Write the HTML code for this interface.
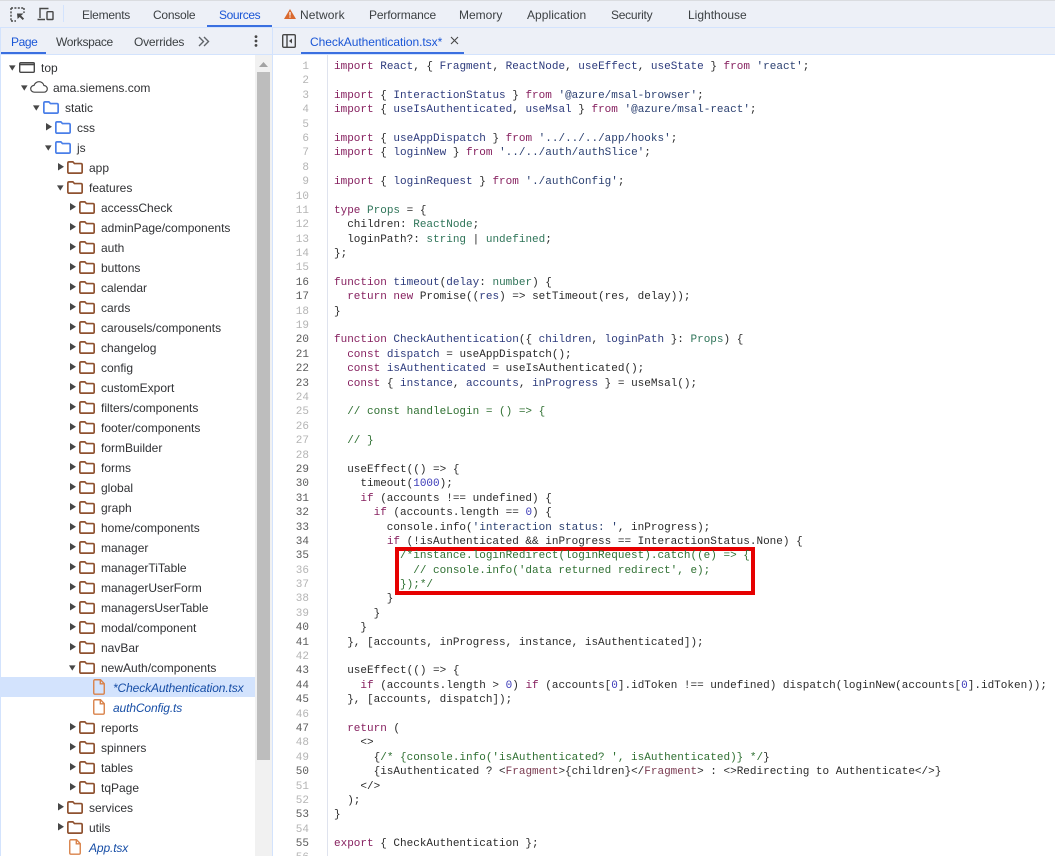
<!DOCTYPE html>
<html><head><meta charset="utf-8">
<style>
html,body{margin:0;padding:0;width:1055px;height:856px;overflow:hidden;background:#fff}
body{position:relative;font-family:"Liberation Sans",sans-serif;font-size:12px;color:#3c4043}
.a{position:absolute}
.bar{position:absolute;background:#edf0f7}
.t{position:absolute;white-space:nowrap;line-height:16px}
.tb{top:7px}.sb{top:34px}
.b{color:#1a56d6}
.row{position:absolute;white-space:nowrap;line-height:20px;height:20px;color:#303134}
.row.f{font-style:italic;color:#174ea6;letter-spacing:-.12px}
svg{position:absolute;overflow:visible}
#code{position:absolute;z-index:2;left:334px;top:60px;font:11px/14.39px "Liberation Mono",monospace;color:#2a2a2a;white-space:pre}
#nums{position:absolute;left:280px;width:29px;top:60px;font:11px/14.39px "Liberation Mono",monospace;color:#b4b4b4;text-align:right;white-space:pre}
#nums b{font-weight:normal;color:#5a5a5a}
i{font-style:normal}
.k{color:#86205f}.d{color:#2c3a7c}.y{color:#2e7458}.s{color:#2a3f70}.n{color:#3a3ab8}.c{color:#2f7032}.g{color:#7a3a50}
</style></head><body>
<svg width="0" height="0" style="position:absolute"><defs>
<symbol id="fo" viewBox="0 0 16 13"><path d="M.85 2.2c0-.8.6-1.35 1.3-1.35h3.7l1.6 1.7h6.4c.8 0 1.3.6 1.3 1.3v7.2c0 .8-.5 1.1-1.3 1.1H2.150c-.8 0-1.300-.3-1.300-1.100z" fill="none" stroke="currentColor" stroke-width="1.7"/></symbol>
<symbol id="fi" viewBox="0 0 12 16"><path d="M.75 1.9c0-.6.5-1.15 1.15-1.15h5.6l3.75 3.9v9.4c0 .6-.5 1.15-1.15 1.15H1.9c-.65 0-1.15-.55-1.15-1.15z M7.3.9v3.9h3.9" fill="none" stroke="#d9824a" stroke-width="1.4"/></symbol>
<symbol id="ao" viewBox="0 0 8 6"><path d="M0 0h7.5L3.75 6z" fill="#474747"/></symbol>
<symbol id="ac" viewBox="0 0 6 8"><path d="M0 0l6 3.75L0 7.5z" fill="#474747"/></symbol>
</defs></svg>

<div class="a" style="left:0;top:0;width:1055px;height:1px;background:#dadce0"></div>
<div class="bar" style="left:0;top:1px;width:1055px;height:26px"></div>
<div class="a" style="left:0;top:27px;width:1055px;height:1px;background:#d3e3fd"></div>
<div class="bar" style="left:0;top:28px;width:1055px;height:26px"></div>
<div class="a" style="left:0;top:54px;width:1055px;height:1px;background:#d3e3fd"></div>
<div class="a" style="left:0;top:28px;width:1px;height:828px;background:#d3e3fd"></div>
<div class="a" style="left:272px;top:28px;width:1px;height:828px;background:#d3e3fd"></div>
<div class="a" style="left:63px;top:5px;width:1px;height:17px;background:#d3e3fd"></div>

<svg style="left:10px;top:7px" width="15" height="15" viewBox="0 0 15 15"><path d="M1 1h13M1 1v13M1 14h5M14 1v5" fill="none" stroke="#474747" stroke-width="1.4" stroke-dasharray="2 1.4"/><path d="M7 6.5h6.5l-2.4 2.1 3 3-1.400 1.400-3-3L7.600 12z" fill="#474747"/></svg>
<svg style="left:37px;top:7px" width="17" height="14" viewBox="0 0 17 14"><path d="M3 11V1.500h8.500M.5 12.500H8" fill="none" stroke="#474747" stroke-width="1.4"/><rect x="10" y="4.700" width="6" height="7.800" fill="none" stroke="#474747" stroke-width="1.4" rx=".6"/></svg>

<div class="t tb" style="left:82px;letter-spacing:-.25px">Elements</div>
<div class="t tb" style="left:153px;letter-spacing:-.25px">Console</div>
<div class="t tb b" style="left:219px;letter-spacing:-.4px">Sources</div>
<div class="a" style="left:207px;top:25px;width:65px;height:2px;background:#3a6fe0"></div>
<svg style="left:284px;top:9px" width="12" height="10" viewBox="0 0 12 10"><path d="M6 0l6 10H0z" fill="#d9692f"/><path d="M5.400 3h1.200v3.600H5.400zM5.400 7.400h1.200v1.200H5.400z" fill="#fff"/></svg>
<div class="t tb" style="left:300px;letter-spacing:.1px">Network</div>
<div class="t tb" style="left:369px;letter-spacing:-.15px">Performance</div>
<div class="t tb" style="left:459px">Memory</div>
<div class="t tb" style="left:527px;letter-spacing:.05px">Application</div>
<div class="t tb" style="left:611px;letter-spacing:-.25px">Security</div>
<div class="t tb" style="left:688px">Lighthouse</div>

<div class="t sb b" style="left:11px;letter-spacing:-.4px">Page</div>
<div class="a" style="left:1px;top:52px;width:45px;height:2px;background:#3a6fe0"></div>
<div class="t sb" style="left:56px;letter-spacing:-.33px">Workspace</div>
<div class="t sb" style="left:134px;letter-spacing:-.2px">Overrides</div>
<svg style="left:198px;top:36px" width="12" height="11" viewBox="0 0 12 11"><path d="M1 1l4.500 4.500L1 10M6 1l4.500 4.500L6 10" fill="none" stroke="#5f6368" stroke-width="1.4"/></svg>
<svg style="left:254px;top:35px" width="4" height="12" viewBox="0 0 4 12"><circle cx="2" cy="1.600" r="1.400" fill="#474747"/><circle cx="2" cy="6" r="1.400" fill="#474747"/><circle cx="2" cy="10.400" r="1.400" fill="#474747"/></svg>
<svg style="left:282px;top:34px" width="14" height="14" viewBox="0 0 14 14"><rect x=".7" y=".7" width="12.600" height="12.600" rx="1.200" fill="none" stroke="#474747" stroke-width="1.4"/><path d="M5 1v12" stroke="#474747" stroke-width="1.4"/><path d="M10 4.500v5L7 7z" fill="#474747"/></svg>
<div class="t sb b" style="left:310px;letter-spacing:-.05px">CheckAuthentication.tsx*</div>
<svg style="left:451px;top:37px" width="7" height="7" viewBox="0 0 7 7"><path d="M0 0l7 7M7 0L0 7" stroke="#474747" stroke-width="1.1"/></svg>
<div class="a" style="left:301px;top:52px;width:163px;height:2px;background:#3a6fe0"></div>

<!-- scrollbar -->
<div class="a" style="left:255px;top:55px;width:17px;height:801px;background:#f1f1f1"></div>
<div class="a" style="left:257px;top:72px;width:13px;height:688px;background:#bdbdbd"></div>
<svg style="left:259px;top:62px" width="9" height="5" viewBox="0 0 9 5"><path d="M4.500 0L9 5H0z" fill="#a3a3a3"/></svg>

<!-- tree -->
<div class="a" style="left:1px;top:677px;width:254px;height:20px;background:#d3e3fd"></div>

<svg style="left:9px;top:65px" width="7" height="6"><use href="#ao"/></svg>
<svg style="left:19px;top:62px" width="16" height="11" viewBox="0 0 16 11"><rect x=".7" y=".7" width="14.600" height="9.600" rx="1" fill="none" stroke="#474747" stroke-width="1.4"/><path d="M1 2.500h14" stroke="#474747" stroke-width="1.6"/></svg>
<div class="row" style="left:41px;top:58px">top</div>

<svg style="left:21px;top:85px" width="7" height="6"><use href="#ao"/></svg>
<svg style="left:30px;top:81px" width="18" height="12" viewBox="0 0 18 12"><path d="M4.500 11.200C2.300 11.200.7 9.700.7 7.800c0-1.900 1.500-3.300 3.300-3.400C4.700 2.200 6.800.7 9 .7c2.500 0 4.500 1.700 4.900 3.800 1.900.2 3.400 1.600 3.400 3.400 0 1.900-1.600 3.300-3.500 3.300z" fill="none" stroke="#474747" stroke-width="1.2"/></svg>
<div class="row" style="left:53px;top:78px">ama.siemens.com</div>

<svg style="left:33px;top:105px" width="7" height="6"><use href="#ao"/></svg>
<svg style="left:43px;top:101px;color:#4a7fe8" width="16" height="13"><use href="#fo"/></svg>
<div class="row" style="left:65px;top:98px">static</div>

<svg style="left:46px;top:123px" width="6" height="8"><use href="#ac"/></svg>
<svg style="left:55px;top:121px;color:#4a7fe8" width="16" height="13"><use href="#fo"/></svg>
<div class="row" style="left:77px;top:118px">css</div>

<svg style="left:45px;top:145px" width="7" height="6"><use href="#ao"/></svg>
<svg style="left:55px;top:141px;color:#4a7fe8" width="16" height="13"><use href="#fo"/></svg>
<div class="row" style="left:77px;top:138px">js</div>

<svg style="left:58px;top:163px" width="6" height="8"><use href="#ac"/></svg>
<svg style="left:67px;top:161px;color:#8f5230" width="16" height="13"><use href="#fo"/></svg>
<div class="row" style="left:89px;top:158px">app</div>

<svg style="left:57px;top:185px" width="7" height="6"><use href="#ao"/></svg>
<svg style="left:67px;top:181px;color:#8f5230" width="16" height="13"><use href="#fo"/></svg>
<div class="row" style="left:89px;top:178px">features</div>

<svg style="left:70px;top:203px" width="6" height="8"><use href="#ac"/></svg><svg style="left:79px;top:201px;color:#8f5230" width="16" height="13"><use href="#fo"/></svg><div class="row" style="left:101px;top:198px">accessCheck</div>
<svg style="left:70px;top:223px" width="6" height="8"><use href="#ac"/></svg><svg style="left:79px;top:221px;color:#8f5230" width="16" height="13"><use href="#fo"/></svg><div class="row" style="left:101px;top:218px">adminPage/components</div>
<svg style="left:70px;top:243px" width="6" height="8"><use href="#ac"/></svg><svg style="left:79px;top:241px;color:#8f5230" width="16" height="13"><use href="#fo"/></svg><div class="row" style="left:101px;top:238px">auth</div>
<svg style="left:70px;top:263px" width="6" height="8"><use href="#ac"/></svg><svg style="left:79px;top:261px;color:#8f5230" width="16" height="13"><use href="#fo"/></svg><div class="row" style="left:101px;top:258px">buttons</div>
<svg style="left:70px;top:283px" width="6" height="8"><use href="#ac"/></svg><svg style="left:79px;top:281px;color:#8f5230" width="16" height="13"><use href="#fo"/></svg><div class="row" style="left:101px;top:278px">calendar</div>
<svg style="left:70px;top:303px" width="6" height="8"><use href="#ac"/></svg><svg style="left:79px;top:301px;color:#8f5230" width="16" height="13"><use href="#fo"/></svg><div class="row" style="left:101px;top:298px">cards</div>
<svg style="left:70px;top:323px" width="6" height="8"><use href="#ac"/></svg><svg style="left:79px;top:321px;color:#8f5230" width="16" height="13"><use href="#fo"/></svg><div class="row" style="left:101px;top:318px">carousels/components</div>
<svg style="left:70px;top:343px" width="6" height="8"><use href="#ac"/></svg><svg style="left:79px;top:341px;color:#8f5230" width="16" height="13"><use href="#fo"/></svg><div class="row" style="left:101px;top:338px">changelog</div>
<svg style="left:70px;top:363px" width="6" height="8"><use href="#ac"/></svg><svg style="left:79px;top:361px;color:#8f5230" width="16" height="13"><use href="#fo"/></svg><div class="row" style="left:101px;top:358px">config</div>
<svg style="left:70px;top:383px" width="6" height="8"><use href="#ac"/></svg><svg style="left:79px;top:381px;color:#8f5230" width="16" height="13"><use href="#fo"/></svg><div class="row" style="left:101px;top:378px">customExport</div>
<svg style="left:70px;top:403px" width="6" height="8"><use href="#ac"/></svg><svg style="left:79px;top:401px;color:#8f5230" width="16" height="13"><use href="#fo"/></svg><div class="row" style="left:101px;top:398px">filters/components</div>
<svg style="left:70px;top:423px" width="6" height="8"><use href="#ac"/></svg><svg style="left:79px;top:421px;color:#8f5230" width="16" height="13"><use href="#fo"/></svg><div class="row" style="left:101px;top:418px">footer/components</div>
<svg style="left:70px;top:443px" width="6" height="8"><use href="#ac"/></svg><svg style="left:79px;top:441px;color:#8f5230" width="16" height="13"><use href="#fo"/></svg><div class="row" style="left:101px;top:438px">formBuilder</div>
<svg style="left:70px;top:463px" width="6" height="8"><use href="#ac"/></svg><svg style="left:79px;top:461px;color:#8f5230" width="16" height="13"><use href="#fo"/></svg><div class="row" style="left:101px;top:458px">forms</div>
<svg style="left:70px;top:483px" width="6" height="8"><use href="#ac"/></svg><svg style="left:79px;top:481px;color:#8f5230" width="16" height="13"><use href="#fo"/></svg><div class="row" style="left:101px;top:478px">global</div>
<svg style="left:70px;top:503px" width="6" height="8"><use href="#ac"/></svg><svg style="left:79px;top:501px;color:#8f5230" width="16" height="13"><use href="#fo"/></svg><div class="row" style="left:101px;top:498px">graph</div>
<svg style="left:70px;top:523px" width="6" height="8"><use href="#ac"/></svg><svg style="left:79px;top:521px;color:#8f5230" width="16" height="13"><use href="#fo"/></svg><div class="row" style="left:101px;top:518px">home/components</div>
<svg style="left:70px;top:543px" width="6" height="8"><use href="#ac"/></svg><svg style="left:79px;top:541px;color:#8f5230" width="16" height="13"><use href="#fo"/></svg><div class="row" style="left:101px;top:538px">manager</div>
<svg style="left:70px;top:563px" width="6" height="8"><use href="#ac"/></svg><svg style="left:79px;top:561px;color:#8f5230" width="16" height="13"><use href="#fo"/></svg><div class="row" style="left:101px;top:558px">managerTiTable</div>
<svg style="left:70px;top:583px" width="6" height="8"><use href="#ac"/></svg><svg style="left:79px;top:581px;color:#8f5230" width="16" height="13"><use href="#fo"/></svg><div class="row" style="left:101px;top:578px">managerUserForm</div>
<svg style="left:70px;top:603px" width="6" height="8"><use href="#ac"/></svg><svg style="left:79px;top:601px;color:#8f5230" width="16" height="13"><use href="#fo"/></svg><div class="row" style="left:101px;top:598px">managersUserTable</div>
<svg style="left:70px;top:623px" width="6" height="8"><use href="#ac"/></svg><svg style="left:79px;top:621px;color:#8f5230" width="16" height="13"><use href="#fo"/></svg><div class="row" style="left:101px;top:618px">modal/component</div>
<svg style="left:70px;top:643px" width="6" height="8"><use href="#ac"/></svg><svg style="left:79px;top:641px;color:#8f5230" width="16" height="13"><use href="#fo"/></svg><div class="row" style="left:101px;top:638px">navBar</div>
<svg style="left:69px;top:665px" width="7" height="6"><use href="#ao"/></svg><svg style="left:79px;top:661px;color:#8f5230" width="16" height="13"><use href="#fo"/></svg><div class="row" style="left:101px;top:658px">newAuth/components</div>
<svg style="left:93px;top:679px" width="12" height="16"><use href="#fi"/></svg><div class="row f" style="left:113px;top:678px">*CheckAuthentication.tsx</div>
<svg style="left:93px;top:699px" width="12" height="16"><use href="#fi"/></svg><div class="row f" style="left:113px;top:698px">authConfig.ts</div>
<svg style="left:70px;top:723px" width="6" height="8"><use href="#ac"/></svg><svg style="left:79px;top:721px;color:#8f5230" width="16" height="13"><use href="#fo"/></svg><div class="row" style="left:101px;top:718px">reports</div>
<svg style="left:70px;top:743px" width="6" height="8"><use href="#ac"/></svg><svg style="left:79px;top:741px;color:#8f5230" width="16" height="13"><use href="#fo"/></svg><div class="row" style="left:101px;top:738px">spinners</div>
<svg style="left:70px;top:763px" width="6" height="8"><use href="#ac"/></svg><svg style="left:79px;top:761px;color:#8f5230" width="16" height="13"><use href="#fo"/></svg><div class="row" style="left:101px;top:758px">tables</div>
<svg style="left:70px;top:783px" width="6" height="8"><use href="#ac"/></svg><svg style="left:79px;top:781px;color:#8f5230" width="16" height="13"><use href="#fo"/></svg><div class="row" style="left:101px;top:778px">tqPage</div>
<svg style="left:58px;top:803px" width="6" height="8"><use href="#ac"/></svg><svg style="left:67px;top:801px;color:#8f5230" width="16" height="13"><use href="#fo"/></svg><div class="row" style="left:89px;top:798px">services</div>
<svg style="left:58px;top:823px" width="6" height="8"><use href="#ac"/></svg><svg style="left:67px;top:821px;color:#8f5230" width="16" height="13"><use href="#fo"/></svg><div class="row" style="left:89px;top:818px">utils</div>
<svg style="left:69px;top:839px" width="12" height="16"><use href="#fi"/></svg><div class="row f" style="left:89px;top:838px">App.tsx</div>

<!-- gutter -->
<div class="a" style="left:327px;top:55px;width:1px;height:801px;background:#dfe3ee"></div>
<div id="nums">1
2
3
4
5
6
7
8
9
10
11
12
13
14
15
<b>16</b>
<b>17</b>
18
19
<b>20</b>
<b>21</b>
<b>22</b>
<b>23</b>
24
25
26
27
28
<b>29</b>
<b>30</b>
<b>31</b>
<b>32</b>
<b>33</b>
<b>34</b>
<b>35</b>
36
37
38
39
<b>40</b>
<b>41</b>
42
<b>43</b>
<b>44</b>
<b>45</b>
46
<b>47</b>
48
49
<b>50</b>
51
52
<b>53</b>
54
<b>55</b>
56</div>

<div id="code"><i class="k">import</i> <i class="d">React</i>, { <i class="d">Fragment</i>, <i class="d">ReactNode</i>, <i class="d">useEffect</i>, <i class="d">useState</i> } <i class="k">from</i> <i class="s">'react'</i>;

<i class="k">import</i> { <i class="d">InteractionStatus</i> } <i class="k">from</i> <i class="s">'@azure/msal-browser'</i>;
<i class="k">import</i> { <i class="d">useIsAuthenticated</i>, <i class="d">useMsal</i> } <i class="k">from</i> <i class="s">'@azure/msal-react'</i>;

<i class="k">import</i> { <i class="d">useAppDispatch</i> } <i class="k">from</i> <i class="s">'../../../app/hooks'</i>;
<i class="k">import</i> { <i class="d">loginNew</i> } <i class="k">from</i> <i class="s">'../../auth/authSlice'</i>;

<i class="k">import</i> { <i class="d">loginRequest</i> } <i class="k">from</i> <i class="s">'./authConfig'</i>;

<i class="k">type</i> <i class="y">Props</i> = {
  children: <i class="y">ReactNode</i>;
  loginPath?: <i class="y">string</i> | <i class="y">undefined</i>;
};

<i class="k">function</i> <i class="d">timeout</i>(<i class="d">delay</i>: <i class="y">number</i>) {
  <i class="k">return</i> <i class="k">new</i> Promise((<i class="d">res</i>) =&gt; setTimeout(res, delay));
}

<i class="k">function</i> <i class="d">CheckAuthentication</i>({ <i class="d">children</i>, <i class="d">loginPath</i> }: <i class="y">Props</i>) {
  <i class="k">const</i> <i class="d">dispatch</i> = useAppDispatch();
  <i class="k">const</i> <i class="d">isAuthenticated</i> = useIsAuthenticated();
  <i class="k">const</i> { <i class="d">instance</i>, <i class="d">accounts</i>, <i class="d">inProgress</i> } = useMsal();

  <i class="c">// const handleLogin = () =&gt; {</i>

  <i class="c">// }</i>

  useEffect(() =&gt; {
    timeout(<i class="n">1000</i>);
    <i class="k">if</i> (accounts !== undefined) {
      <i class="k">if</i> (accounts.length == <i class="n">0</i>) {
        console.info(<i class="s">'interaction status: '</i>, inProgress);
        <i class="k">if</i> (!isAuthenticated &amp;&amp; inProgress == InteractionStatus.None) {
          <i class="c">/*instance.loginRedirect(loginRequest).catch((e) =&gt; {
            // console.info('data returned redirect', e);
          });*/</i>
        }
      }
    }
  }, [accounts, inProgress, instance, isAuthenticated]);

  useEffect(() =&gt; {
    <i class="k">if</i> (accounts.length &gt; <i class="n">0</i>) <i class="k">if</i> (accounts[<i class="n">0</i>].idToken !== undefined) dispatch(loginNew(accounts[<i class="n">0</i>].idToken));
  }, [accounts, dispatch]);

  <i class="k">return</i> (
    &lt;&gt;
      {<i class="c">/* {console.info('isAuthenticated? ', isAuthenticated)} */</i>}
      {isAuthenticated ? &lt;<i class="g">Fragment</i>&gt;{children}&lt;/<i class="g">Fragment</i>&gt; : &lt;&gt;Redirecting to Authenticate&lt;/&gt;}
    &lt;/&gt;
  );
}

<i class="k">export</i> { CheckAuthentication };
</div>

<!-- red highlight -->
<div class="a" style="left:395px;top:547px;width:352px;height:40px;border:4px solid #e60000;z-index:1"></div>
</body></html>
